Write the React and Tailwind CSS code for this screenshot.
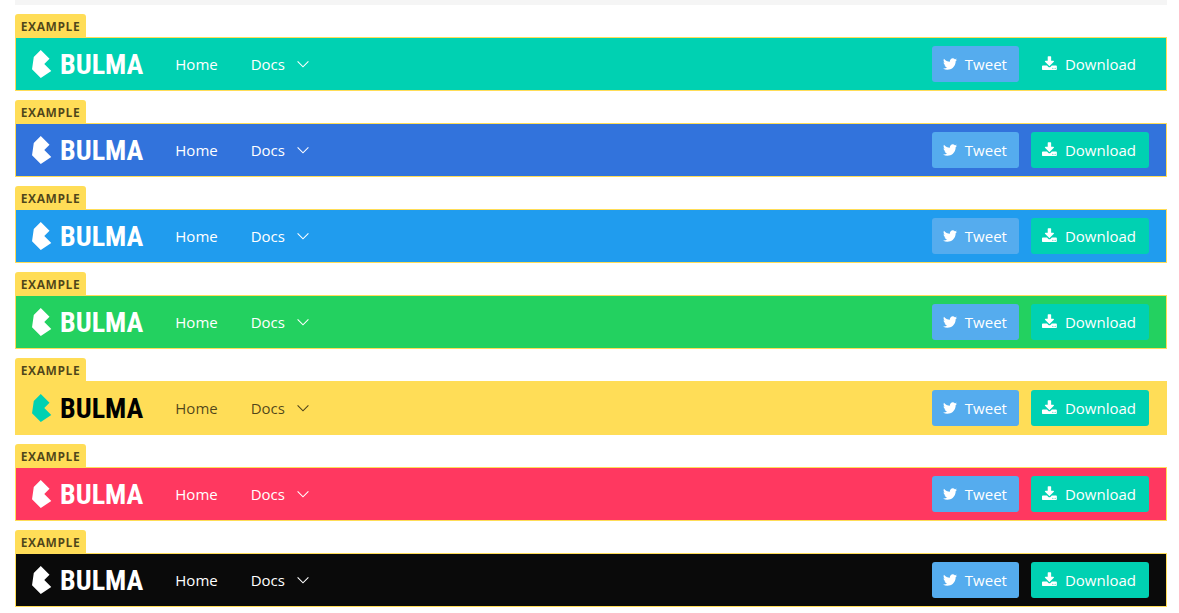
const bars = [
  { name: 'primary', bg: 'bg-[#00d1b2]', text: 'text-white', mark: 'text-white', word: 'text-white' },
  { name: 'link', bg: 'bg-[#3273dc]', text: 'text-white', mark: 'text-white', word: 'text-white' },
  { name: 'info', bg: 'bg-[#209cee]', text: 'text-white', mark: 'text-white', word: 'text-white' },
  { name: 'success', bg: 'bg-[#23d160]', text: 'text-white', mark: 'text-white', word: 'text-white' },
  { name: 'warning', bg: 'bg-[#ffdd57]', text: 'text-black/70', mark: 'text-[#00d1b2]', word: 'text-black' },
  { name: 'danger', bg: 'bg-[#ff3860]', text: 'text-white', mark: 'text-white', word: 'text-white' },
  { name: 'black', bg: 'bg-[#0a0a0a]', text: 'text-white', mark: 'text-white', word: 'text-white' },
];

function TwitterIcon() {
  return (
    <svg className="size-4" viewBox="108 0 1792 1792" fill="currentColor" aria-hidden="true">
      <path d="M1684 408q-67 98-162 167 1 14 1 42 0 130-38 259.5t-115.5 248.5-184.5 210.5-258 146-323 54.5q-271 0-496-145 35 4 78 4 225 0 401-138-105-2-188-64.5t-114-159.5q33 5 61 5 43 0 85-11-112-23-185.5-111.5t-73.5-205.5v-4q68 38 146 41-66-44-105-115t-39-154q0-88 44-163 121 149 294.5 238.5t371.5 99.5q-8-38-8-74 0-134 94.5-228.5t228.5-94.5q140 0 236 102 109-21 205-78-37 115-142 178 93-10 186-50z" />
    </svg>
  );
}

function DownloadIcon() {
  return (
    <svg className="size-4" viewBox="64 -32 1792 1792" fill="currentColor" aria-hidden="true">
      <path d="M1344 1344q0-26-19-45t-45-19-45 19-19 45 19 45 45 19 45-19 19-45zm256 0q0-26-19-45t-45-19-45 19-19 45 19 45 45 19 45-19 19-45zm128-224v320q0 40-28 68t-68 28h-1472q-40 0-68-28t-28-68v-320q0-40 28-68t68-28h465l135 136q58 56 136 56t136-56l136-136h464q40 0 68 28t28 68zm-325-569q17 41-14 70l-448 448q-18 19-45 19t-45-19l-448-448q-31-29-14-70 17-39 59-39h256v-448q0-26 19-45t45-19h256q26 0 45 19t19 45v448h256q42 0 59 39z" />
    </svg>
  );
}

function Logo({ mark, word }) {
  return (
    <a href="#home" className="flex items-center gap-2 px-4">
      <svg className={`h-7 w-5 ${mark}`} viewBox="0 0 114 160" fill="currentColor" aria-hidden="true">
        <path d="M0 110 10 40 50 0l50 50-30 30 40 40-60 40z" />
      </svg>
      <span className={`pt-0.5 font-['Roboto_Condensed','Liberation_Sans_Narrow',sans-serif] text-[28px] leading-7 font-bold ${word}`}>
        BULMA
      </span>
    </a>
  );
}

function Navbar({ bar }) {
  return (
    <nav aria-label={bar.name} className={`flex min-h-13 items-stretch border border-[#ffdd57] ${bar.bg} ${bar.text}`}>
      <Logo mark={bar.mark} word={bar.word} />
      <a href="#home" className="flex items-center px-4 py-3.5">Home</a>
      <button type="button" className="flex items-center gap-3 px-[17px]">
        Docs
        <svg className="h-2 w-3" viewBox="0 0 12 8" fill="none" stroke="currentColor" strokeWidth="1.1" aria-hidden="true">
          <path d="M.6 1.400 6 6.800l5.400-5.400" />
        </svg>
      </button>
      <div className="ml-auto flex items-center gap-3 pr-[17px] text-white">
        <a href="#tweet" className="flex h-9 items-center gap-1.5 rounded-[3px] bg-[#55acee] pr-3 pl-[11px]">
          <TwitterIcon />
          Tweet
        </a>
        <a href="#download" className="flex h-9 items-center gap-[7px] rounded-[3px] bg-[#00d1b2] pr-[13px] pl-[11px]">
          <DownloadIcon />
          Download
        </a>
      </div>
    </nav>
  );
}

export default function App() {
  return (
    <main className="bg-white pr-3 pl-[15px] font-['Open_Sans',sans-serif] text-[15px] leading-6">
      <div className="h-[5px] bg-[#f5f5f5]" />
      {bars.map((bar) => (
        <section key={bar.name} className="pt-[9px]">
          <h2 className="flex h-[23px] w-[71px] items-center justify-center rounded-t-[3px] bg-[#ffdd57] pt-0.5 text-xs font-bold tracking-wider text-black/70">
            EXAMPLE
          </h2>
          <Navbar bar={bar} />
        </section>
      ))}
    </main>
  );
}
